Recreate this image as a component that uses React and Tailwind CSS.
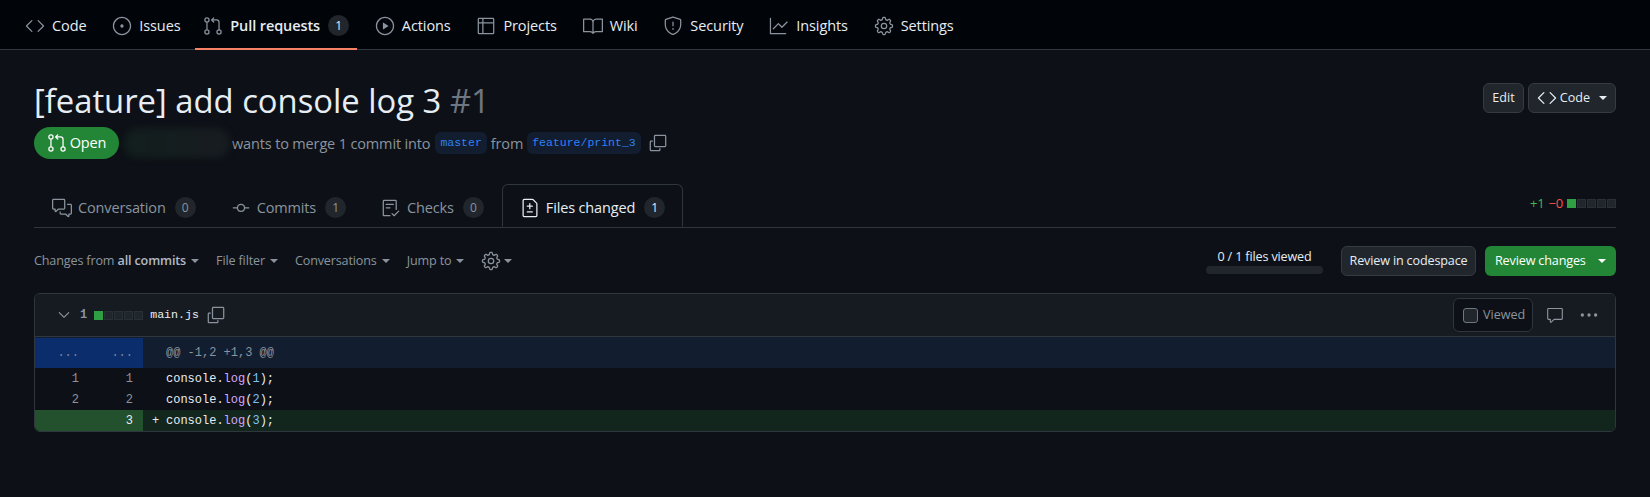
import React from "react";
import {
  GoCode,
  GoIssueOpened,
  GoGitPullRequest,
  GoPlay,
  GoTable,
  GoBook,
  GoShield,
  GoGraph,
  GoGear,
  GoCommentDiscussion,
  GoGitCommit,
  GoChecklist,
  GoFileDiff,
  GoCopy,
  GoChevronDown,
  GoComment,
  GoKebabHorizontal,
} from "react-icons/go";

const sans = "font-['Open_Sans','Liberation_Sans',sans-serif]";
const mono = "font-['Liberation_Mono',monospace]";

const navItems = [
  { label: "Code", icon: GoCode },
  { label: "Issues", icon: GoIssueOpened },
  { label: "Pull requests", icon: GoGitPullRequest, count: 1, active: true },
  { label: "Actions", icon: GoPlay },
  { label: "Projects", icon: GoTable },
  { label: "Wiki", icon: GoBook },
  { label: "Security", icon: GoShield },
  { label: "Insights", icon: GoGraph },
  { label: "Settings", icon: GoGear },
];

const tabs = [
  { label: "Conversation", icon: GoCommentDiscussion, count: 0 },
  { label: "Commits", icon: GoGitCommit, count: 1 },
  { label: "Checks", icon: GoChecklist, count: 0 },
  { label: "Files changed", icon: GoFileDiff, count: 1, active: true },
];

function Caret({ className = "" }) {
  return <span className={"inline-block w-0 h-0 border-x-[4px] border-x-transparent border-t-[4px] border-t-current " + className} />;
}

function Squares({ green = 1 }) {
  return (
    <div className="flex gap-px">
      {[0, 1, 2, 3, 4].map((i) => (
        <span key={i} className={i < green ? "w-[9px] h-[9px] bg-[#2ea043]" : "w-[9px] h-[9px] bg-[#21262d] border border-[#2a3038]"} />
      ))}
    </div>
  );
}

function Filter({ children, className = "" }) {
  return (
    <div className={"flex items-center gap-[5px] text-[12.6px] tracking-[-0.15px] text-[#8b949e] " + className}>
      <span>{children}</span>
      <Caret />
    </div>
  );
}

function CodeLine({ n }) {
  return (
    <>
      <span className="text-[#e6edf3]">console.</span>
      <span className="text-[#d2a8ff]">log</span>
      <span className="text-[#e6edf3]">(</span>
      <span className="text-[#79c0ff]">{n}</span>
      <span className="text-[#e6edf3]">);</span>
    </>
  );
}

function DiffRow({ left, right, added, children }) {
  const num = "w-[54px] shrink-0 h-full flex items-center justify-end pr-[10px] " + (added ? "bg-[#23502d] text-[#e6edf3]" : "text-[#8b949e]");
  return (
    <div className={"flex h-[21px] items-center " + (added ? "bg-[#12261e]" : "")}>
      <div className={num}>{left}</div>
      <div className={num}>{right}</div>
      <div className="w-[23px] shrink-0 pl-[9px] text-[#e6edf3]">{added ? "+" : ""}</div>
      <div>{children}</div>
    </div>
  );
}

export default function App() {
  return (
    <div className={"min-h-[497px] bg-[#0d1117] text-[#e6edf3] overflow-hidden " + sans}>
      <nav className="h-[50px] bg-[#010409] border-b border-[#30363d] flex gap-[9.8px] pl-[17px]">
        {navItems.map(({ label, icon: Icon, count, active }) => (
          <div
            key={label}
            className={"relative h-[50px] pt-px px-[8px] flex items-center gap-[7px] text-[14.5px] tracking-[-0.1px] text-[#e6edf3] " + (active ? "font-semibold -ml-[3px]" : "")}
          >
            <Icon className="text-[#8b949e]" size={20} />
            <span>{label}</span>
            {count != null && (
              <span className="w-[21px] h-[21px] ml-px rounded-full bg-[#21262d] text-[12px] font-normal flex items-center justify-center">{count}</span>
            )}
            {active && <span className="absolute left-0 right-0 bottom-0 h-[2px] bg-[#f78166]" />}
          </div>
        ))}
      </nav>

      <main className="px-[34px]">
        <div className="flex justify-between pt-[33px]">
          <h1 className="text-[32.8px] leading-[36px] font-normal">
            [feature] add console log 3 <span className="text-[#6e7681]">#1</span>
          </h1>
          <div className="flex gap-[4px]">
            <button className="h-[30px] w-[41px] rounded-[6px] bg-[#21262d] border border-[#363b42] text-[12.6px]">Edit</button>
            <button className="h-[30px] w-[88px] rounded-[6px] bg-[#21262d] border border-[#363b42] text-[12.6px] flex items-center justify-center gap-[3px]">
              <GoCode size={20} />
              <span>Code</span>
              <Caret className="ml-[6px]" />
            </button>
          </div>
        </div>

        <div className="flex items-center h-[32px] mt-[8px] text-[14.5px] tracking-[-0.15px] text-[#8b949e]">
          <div className="w-[85px] h-[32px] rounded-full bg-[#238636] text-white flex items-center justify-center gap-[3px]">
            <GoGitPullRequest size={20} />
            <span>Open</span>
          </div>
          <div className="w-[106px] h-[30px] ml-[5px] mr-[2px] rounded-full bg-gradient-to-r from-[#121e1d] to-[#171c21] blur-[3px]" />
          <span className="pt-px">wants to merge 1 commit into</span>
          <span className={"ml-[5px] h-[22px] px-[5px] flex items-center rounded-[6px] bg-[#121d2f] text-[#2f81f7] text-[11.5px] tracking-normal " + mono}>master</span>
          <span className="mx-[4px] pt-px">from</span>
          <span className={"h-[22px] px-[5px] flex items-center rounded-[6px] bg-[#121d2f] text-[#2f81f7] text-[11.5px] tracking-normal " + mono}>feature/print_3</span>
          <GoCopy size={20} className="ml-[7px]" />
        </div>

        <div className="flex items-end justify-between h-[43px] mt-[26px] border-b border-[#30363d]">
          <div className="flex h-[43px] ml-[10px]">
            {tabs.map(({ label, icon: Icon, count, active }) => (
              <div
                key={label}
                className={
                  "flex items-center gap-[6px] h-[43px] pt-[4px] text-[14.5px] tracking-[-0.15px] rounded-t-[6px] " +
                  (active
                    ? "bg-[#0d1117] border border-[#30363d] border-b-[#0d1117] text-[#e6edf3] px-[17px] -ml-[9px] -mb-px"
                    : "text-[#8b949e] px-[8px] mr-[19px]")
                }
              >
                <Icon size={20} />
                <span>{label}</span>
                <span className="w-[21px] h-[21px] ml-[3px] rounded-full bg-[#21262d] text-[12px] flex items-center justify-center">{count}</span>
              </div>
            ))}
          </div>
          <div className="flex items-center gap-[4px] mb-[14px] text-[13px] tracking-[-0.2px] font-medium">
            <span className="text-[#3fb950]">+1</span>
            <span className="text-[#f85149]">−0</span>
            <Squares />
          </div>
        </div>

        <div className="flex items-center justify-between h-[30px] mt-[18px]">
          <div className="flex items-center gap-[17px]">
            <Filter>
              Changes from <strong className="font-semibold text-[#b1bac4]">all commits</strong>
            </Filter>
            <Filter className="font-medium">File filter</Filter>
            <Filter className="font-medium">Conversations</Filter>
            <Filter className="font-medium">Jump to</Filter>
            <div className="flex items-center gap-[3px] text-[#8b949e]">
              <GoGear size={20} />
              <Caret />
            </div>
          </div>
          <div className="flex items-center tracking-[-0.15px]">
            <div className="w-[117px] mr-[18px] flex flex-col items-center">
              <span className="text-[12.6px] leading-[18px]">0 / 1 files viewed</span>
              <span className="w-full h-[8px] rounded-full bg-[#21262d]" />
            </div>
            <button className="w-[135px] h-[30px] rounded-[6px] bg-[#21262d] border border-[#363b42] text-[12.6px]">Review in codespace</button>
            <button className="w-[131px] h-[30px] ml-[9px] rounded-[6px] bg-[#238636] text-white text-[12.6px] flex items-center justify-between pl-[10px] pr-[10px]">
              <span>Review changes</span>
              <Caret />
            </button>
          </div>
        </div>

        <div className="mt-[17px] rounded-[6px] border border-[#30363d] overflow-hidden">
          <div className="h-[43px] bg-[#161b22] border-b border-[#30363d] flex items-center pl-[20px] pr-[16px]">
            <GoChevronDown size={18} className="text-[#8b949e]" />
            <span className={"ml-[7px] text-[12px] font-bold text-[#8b949e] " + mono}>1</span>
            <div className="ml-[7px]">
              <Squares />
            </div>
            <span className={"ml-[7px] text-[11.6px] " + mono}>main.js</span>
            <GoCopy size={20} className="ml-[7px] text-[#8b949e]" />
            <div className="ml-auto flex items-center">
              <div className="w-[80px] h-[34px] rounded-[6px] border border-[#30363d] bg-[#0d1117] flex items-center pl-[9px] gap-[5px] text-[12.6px] text-[#8b949e]">
                <span className="w-[15px] h-[15px] rounded-[3px] bg-[#21262d] border border-[#6e7681]" />
                <span>Viewed</span>
              </div>
              <GoComment size={18} className="ml-[13px] text-[#8b949e]" />
              <GoKebabHorizontal size={20} className="ml-[15px] text-[#8b949e]" />
            </div>
          </div>

          <div className={"text-[12px] " + mono}>
            <div className="h-[31px] pt-px flex items-center bg-[#121d2f] text-[#8b949e]">
              <div className="w-[108px] h-full shrink-0 bg-[#0c2d6b] flex items-center text-[#7d8590]">
                <span className="w-[54px] pr-[10px] text-right">...</span>
                <span className="w-[54px] pr-[10px] text-right">...</span>
              </div>
              <span className="pl-[23px]">@@ -1,2 +1,3 @@</span>
            </div>
            <DiffRow left="1" right="1"><CodeLine n="1" /></DiffRow>
            <DiffRow left="2" right="2"><CodeLine n="2" /></DiffRow>
            <DiffRow left="" right="3" added><CodeLine n="3" /></DiffRow>
          </div>
        </div>
      </main>
    </div>
  );
}
